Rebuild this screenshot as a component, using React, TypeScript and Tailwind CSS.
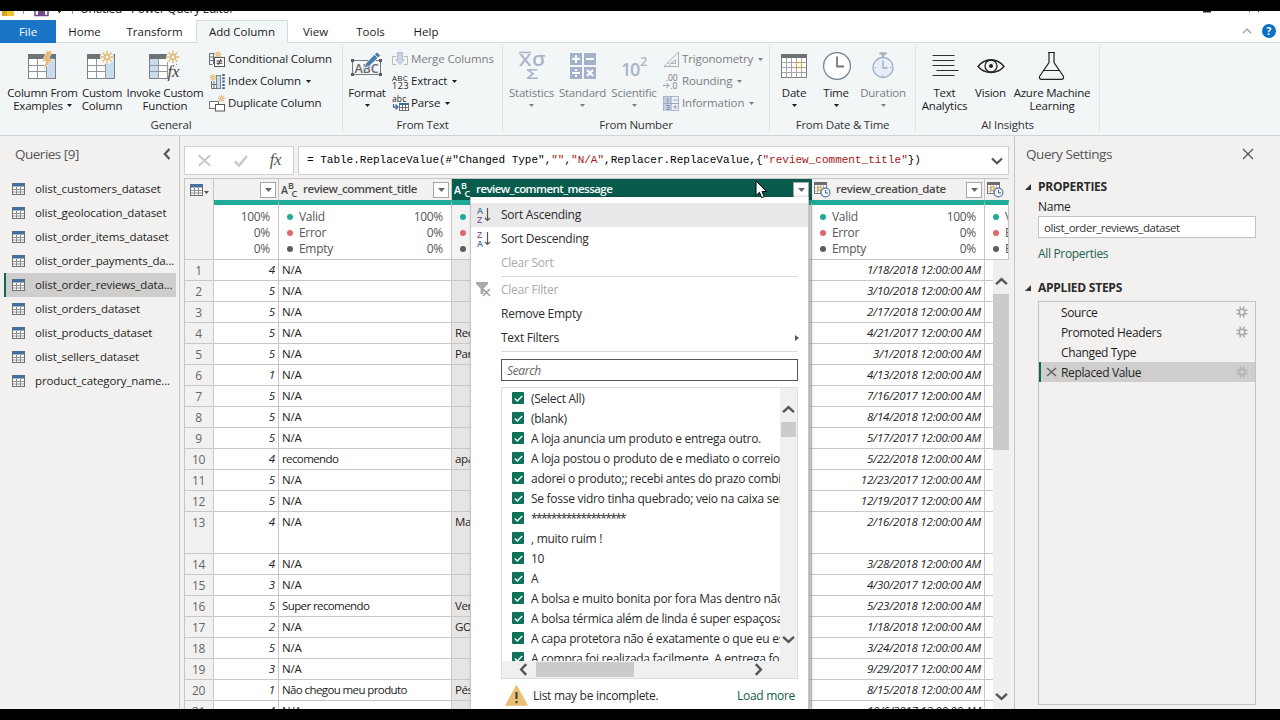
import React from "react";
import clsx from "clsx";

const TABS = [
  { label: "File", width: "w-[56px]" },
  { label: "Home", width: "w-[57px]" },
  { label: "Transform", width: "w-[83px]" },
  { label: "Add Column", width: "w-[92px]" },
  { label: "View", width: "w-[55px]" },
  { label: "Tools", width: "w-[55px]" },
  { label: "Help", width: "w-[56px]" },
];

const QUERIES = [
  "olist_customers_dataset",
  "olist_geolocation_dataset",
  "olist_order_items_dataset",
  "olist_order_payments_da...",
  "olist_order_reviews_data...",
  "olist_orders_dataset",
  "olist_products_dataset",
  "olist_sellers_dataset",
  "product_category_name...",
];

interface Row {
  score: number;
  title: string;
  message?: string;
  date: string;
  tall?: boolean;
}

const ROWS: Row[] = [
  { score: 4, title: "N/A", date: "1/18/2018" },
  { score: 5, title: "N/A", date: "3/10/2018" },
  { score: 5, title: "N/A", date: "2/17/2018" },
  { score: 5, title: "N/A", message: "Rec", date: "4/21/2017" },
  { score: 5, title: "N/A", message: "Par", date: "3/1/2018" },
  { score: 1, title: "N/A", date: "4/13/2018" },
  { score: 5, title: "N/A", date: "7/16/2017" },
  { score: 5, title: "N/A", date: "8/14/2018" },
  { score: 5, title: "N/A", date: "5/17/2017" },
  { score: 4, title: "recomendo", message: "apa", date: "5/22/2018" },
  { score: 5, title: "N/A", date: "12/23/2017" },
  { score: 5, title: "N/A", date: "12/19/2017" },
  { score: 4, title: "N/A", message: "Ma", date: "2/16/2018", tall: true },
  { score: 4, title: "N/A", date: "3/28/2018" },
  { score: 3, title: "N/A", date: "4/30/2017" },
  { score: 5, title: "Super recomendo", message: "Ver", date: "5/23/2018" },
  { score: 2, title: "N/A", message: "GO", date: "1/18/2018" },
  { score: 5, title: "N/A", date: "3/24/2018" },
  { score: 3, title: "N/A", date: "9/29/2017" },
  { score: 1, title: "Não chegou meu produto", message: "Pés", date: "8/15/2018" },
  { score: 4, title: "N/A", date: "10/6/2017" },
];

const FILTER_VALUES = [
  "(Select All)",
  "(blank)",
  "A loja anuncia um produto e entrega outro.",
  "A loja postou o produto de e mediato o correio",
  "adorei o produto;; recebi antes do prazo combinado",
  "Se fosse vidro tinha quebrado; veio na caixa sem",
  "*******************",
  ", muito ruim !",
  "10",
  "A",
  "A bolsa e muito bonita por fora Mas dentro não",
  "A bolsa térmica além de linda é super espaçosa",
  "A capa protetora não é exatamente o que eu esperava",
  "A compra foi realizada facilmente. A entrega foi",
];

const STEPS = [
  { name: "Source", gear: true },
  { name: "Promoted Headers", gear: true },
  { name: "Changed Type", gear: false },
  { name: "Replaced Value", gear: true },
];

const GRID_COLS = "grid grid-cols-[30px_65px_173px_360px_173px_24px]";

/* ---------- small glyphs ---------- */

function Caret({ className }: { className?: string }) {
  return (
    <svg width="5" height="3" viewBox="0 0 5 3" className={clsx("inline-block", className)}>
      <path d="M0 0h5L2.5 3z" fill="currentColor" />
    </svg>
  );
}

function Chevron({ dir, size = 12 }: { dir: "up" | "down" | "left" | "right"; size?: number }) {
  const d = {
    up: "M1 8.500 6 3.800l5 4.700",
    down: "M1 3.500 6 8.200l5-4.700",
    left: "M8.500 1 3.800 6l4.700 5",
    right: "M3.500 1 8.200 6l-4.700 5",
  }[dir];
  return (
    <svg width={size} height={size} viewBox="0 0 12 12" fill="none" stroke="#555" strokeWidth="2.200">
      <path d={d} />
    </svg>
  );
}

function Spark({ x, y, r = 6 }: { x: number; y: number; r?: number }) {
  const k = r * 0.7;
  return (
    <g stroke="#e2bd78" strokeWidth={r > 4 ? 1.5 : 1.1}>
      <path d={`M${x - r} ${y}H${x + r}M${x} ${y - r}V${y + r}M${x - k} ${y - k}L${x + k} ${y + k}M${x + k} ${y - k}L${x - k} ${y + k}`} />
      <circle cx={x} cy={y} r={r * 0.36} fill="#f3f6f7" />
    </g>
  );
}

function TableBase({ shade }: { shade: "left" | "right" }) {
  return (
    <g>
      <rect x="0.5" y="3.5" width="27" height="24" fill="#fff" stroke="#7d8084" />
      {shade === "right" && <rect x="19" y="8" width="8" height="19" fill="#c9dcee" />}
      {shade === "left" && <rect x="1" y="8" width="8.500" height="19" fill="#c9dcee" />}
      <path d="M0 3h28v5H0z" fill="#6f7276" />
      <path d="M9.500 8v20M18.500 8v20M1 14.500h18M1 20.500h18" stroke="#93969a" fill="none" />
    </g>
  );
}

/* ---------- ribbon icons ---------- */

const IconExamples = () => (
  <svg width="30" height="30" viewBox="0 0 30 30">
    <TableBase shade="right" />
    <path d="M18.500 0h6l-4 8h4.500L15 19l3-8.500h-3.500z" fill="#e5bb72" stroke="#f3f6f7" strokeWidth=".6" />
  </svg>
);

const IconCustom = () => (
  <svg width="30" height="30" viewBox="0 0 30 30">
    <TableBase shade="right" />
    <circle cx="20" cy="6" r="7" fill="#f3f6f7" />
    <Spark x={20} y={6} r={6.5} />
  </svg>
);

const IconInvoke = () => (
  <svg width="32" height="30" viewBox="0 0 32 30" className="overflow-visible">
    <TableBase shade="left" />
    <circle cx="24" cy="7" r="7" fill="#f3f6f7" />
    <path d="M19 14h13v17H19z" fill="#f3f6f7" />
    <Spark x={24} y={6} r={6.3} />
    <text x="18.500" y="26" fontSize="17" fontStyle="italic" fontFamily="Liberation Serif, serif" fill="#444">
      fx
    </text>
  </svg>
);

const IconConditional = () => (
  <svg width="17" height="17" viewBox="0 0 17 17">
    <path d="M.5 2v12M.5 2.500h5M.5 6h5M.5 9.500h4M.5 13.500h3M4.500 3v10" stroke="#6d7073" fill="none" />
    <Spark x={9} y={3.5} r={3.5} />
    <rect x="5.500" y="6.500" width="10" height="9" fill="#fff" stroke="#555" />
    <path d="M7.500 10h6M7.500 12.200h6M12 8l-3 6" stroke="#333" fill="none" />
  </svg>
);

const IconIndex = () => (
  <svg width="17" height="17" viewBox="0 0 17 17">
    <rect x="7.500" y="2.500" width="4" height="13" fill="#c9dcee" stroke="#7d8084" />
    <path d="M2.500 8v7.500h5M2.500 11.500h5M5 8v8" stroke="#6d7073" fill="none" />
    <path d="M14.500 1v15" stroke="#37679b" strokeWidth="2.500" strokeDasharray="2 1.300" />
    <Spark x={4} y={4.5} r={3.5} />
  </svg>
);

const IconDuplicate = () => (
  <svg width="17" height="17" viewBox="0 0 17 17">
    <rect x=".5" y="6.500" width="9" height="7" fill="#fff" stroke="#777" />
    <rect x="6.500" y="9.500" width="9" height="6.500" fill="#fff" stroke="#555" />
    <Spark x={12.5} y={3.5} r={3.5} />
  </svg>
);

const IconFormat = () => (
  <svg width="32" height="30" viewBox="0 0 32 30">
    <rect x="1.500" y="9.500" width="28" height="14" fill="none" stroke="#77797c" />
    <path d="M0 8h3v3H0zM28 8h3v3h-3zM0 22h3v3H0zM28 22h3v3h-3z" fill="#5b5d60" />
    <text x="3.500" y="21.500" fontSize="12.500" fontWeight="600" fontFamily="Open Sans, sans-serif" fill="#6a6c6f" textLength="24" lengthAdjust="spacingAndGlyphs">
      ABC
    </text>
    <path d="M13 17.500l2-5.500L26 1l3.500 3.500L18.500 15z" fill="#4d7fae" stroke="#f3f6f7" strokeWidth=".8" />
    <path d="M23.500 3.500l3.500 3.500" stroke="#f3f6f7" />
  </svg>
);

const IconMerge = () => (
  <svg width="17" height="16" viewBox="0 0 17 16">
    <path d="M4 5.500H.5v8H4M12 5.500h3.500v8H12" fill="none" stroke="#b5b9c0" />
    <path d="M5.500 1.500h5v7h2L8 13.500 3.500 8.500h2z" fill="#c9d3e2" stroke="#b4bfd0" />
  </svg>
);

const IconExtract = () => (
  <svg width="17" height="17" viewBox="0 0 17 17" className="overflow-visible" fontFamily="Open Sans, sans-serif" fill="#222">
    <text x="0" y="7.500" fontSize="8" textLength="15.500">
      ABC
    </text>
    <text x="0" y="16" fontSize="9" textLength="16.500">
      123
    </text>
  </svg>
);

const IconParse = () => (
  <svg width="17" height="17" viewBox="0 0 17 17" className="overflow-visible">
    <text x="0" y="7" fontSize="8.500" fontFamily="Open Sans, sans-serif" fill="#222" textLength="14">
      abc
    </text>
    <path d="M1.500 9v3h4M3.500 9.500l2.500 2.500-2.500 2.500" fill="none" stroke="#3c6d9c" strokeWidth="1.300" />
    <rect x="7.500" y="8.500" width="9" height="7" fill="#fff" stroke="#6d7073" />
    <path d="M7 8h10v2H7z" fill="#3c6d9c" />
    <path d="M10.500 10v6M13.500 10v6M8 12.500h8" stroke="#6d7073" fill="none" />
  </svg>
);

const IconStatistics = () => (
  <svg width="28" height="30" viewBox="0 0 28 30" className="overflow-visible" fontFamily="Open Sans, sans-serif" fontWeight="600" fill="#a9b5c9">
    <path d="M1 1.500h12" stroke="#a9b5c9" strokeWidth="1.500" />
    <text x="1" y="14.500" fontSize="15.500" textLength="12" lengthAdjust="spacingAndGlyphs">X</text>
    <text x="14" y="14.500" fontSize="20" textLength="13" lengthAdjust="spacingAndGlyphs">σ</text>
    <text x="8" y="28" fontSize="15" textLength="12" lengthAdjust="spacingAndGlyphs">Σ</text>
  </svg>
);

const IconStandard = () => (
  <svg width="28" height="30" viewBox="0 0 28 30">
    <path d="M1 2h12v12H1zM15 2h12v12H15zM1 16h12v12H1zM15 16h12v12H15z" fill="#a3b2ca" />
    <path d="M3 8h8M7 4v8M17 8h8M3 22h8M18 19l6 6M24 19l-6 6" stroke="#fff" strokeWidth="2" />
    <path d="M6 18h2v2H6zM6 24h2v2H6z" fill="#fff" />
  </svg>
);

const IconScientific = () => (
  <svg width="28" height="30" viewBox="0 0 28 30" className="overflow-visible" fontFamily="Open Sans, sans-serif" fontWeight="600" fill="#a9b5c9">
    <text x="1" y="25" fontSize="18" textLength="19">10</text>
    <text x="20" y="15" fontSize="13">2</text>
  </svg>
);

const IconTrig = () => (
  <svg width="17" height="17" viewBox="0 0 17 17" fill="none" stroke="#aab0b8">
    <path d="M15.500 1v14.500H1zM12.500 9v3.500h-5z" />
    <path d="M5 12c1.500.5 2 2 2 3.500" />
  </svg>
);

const IconRounding = () => (
  <svg width="17" height="17" viewBox="0 0 17 17" className="overflow-visible" fontFamily="Open Sans, sans-serif" fill="#75797e">
    <text x="3" y="7.500" fontSize="8.500">.00</text>
    <text x="7.500" y="15.500" fontSize="8.500">.0</text>
    <path d="M0 12.500h6M3.500 10l2.500 2.500L3.500 15" fill="none" stroke="#98a0ac" />
  </svg>
);

const IconInformation = () => (
  <svg width="17" height="16" viewBox="0 0 17 16">
    <rect x=".5" y="1.500" width="15" height="14" fill="#eef2f7" stroke="#a9b5c9" />
    <path d="M1 2h7v14H1z" fill="#c4d0e2" />
    <path d="M8 1.500v14M1 8.500h15M10 5h4.500M10 12h4.500M12.200 9.800v4.400" stroke="#98a5bb" fill="none" />
    <path d="M3.500 4h1.500v3.500M3 10.500h3v2H4M6 12.500v2H3" stroke="#8492aa" fill="none" />
  </svg>
);

const IconDate = () => (
  <svg width="28" height="30" viewBox="0 0 28 30">
    <rect x="1.500" y="3.500" width="25" height="23" fill="#fff" stroke="#7d7f82" />
    <path d="M1 3h26v4H1z" fill="#6f7072" />
    <path d="M6.500 7v20M11.500 7v20M16.500 7v20M21.500 7v20M2 11.500h24M2 16.500h24M2 21.500h24" stroke="#a3a5a8" fill="none" />
    <rect x="16.500" y="11.500" width="5" height="5" fill="#fff" stroke="#d9a441" />
  </svg>
);

const IconTime = () => (
  <svg width="30" height="30" viewBox="0 0 30 30" fill="none" className="ml-px">
    <circle cx="15" cy="15" r="13.400" fill="#fff" stroke="#6e7f8f" strokeWidth="1.200" />
    <path d="M15 5.500V15.500h7" stroke="#777" strokeWidth="1.800" />
  </svg>
);

const IconDuration = () => (
  <svg width="24" height="30" viewBox="0 0 24 30" fill="none">
    <path d="M8.500 2.500h7M12 2v4" stroke="#a9b0ba" strokeWidth="2.500" />
    <circle cx="12" cy="16.500" r="10" fill="#e6eef9" stroke="#a4b4ca" strokeWidth="1.300" />
    <path d="M12 9.500v7.500h4.500" stroke="#a2adbd" strokeWidth="1.400" />
    <path d="M12 24v1.500M3.500 16.500H5M19 16.500h1.500" stroke="#a2adbd" />
  </svg>
);

const IconTextAnalytics = () => (
  <svg width="28" height="30" viewBox="0 0 28 30">
    <path d="M1.500 4.500h22M1.500 9.500h22M1.500 14.500h22M5.500 19.500h22M1.500 24.500h22" stroke="#2f2f2f" strokeWidth="1.100" />
  </svg>
);

const IconVision = () => (
  <svg width="28" height="30" viewBox="0 0 28 30" fill="none" stroke="#222" strokeWidth="1.300">
    <path d="M1 15.500C8 6.500 20 6.500 27 15.500 20 23.500 8 23.500 1 15.500z" />
    <circle cx="14" cy="15" r="6" />
    <circle cx="14" cy="15" r="2" fill="#222" stroke="none" />
  </svg>
);

const IconFlask = () => (
  <svg width="28" height="30" viewBox="0 0 28 30" fill="none" stroke="#222" strokeWidth="1.200">
    <path d="M10 1.500h7M11 1.500v10L1.800 25c-1 1.800 0 3.300 1.800 3.300h19.800c1.800 0 2.800-1.500 1.800-3.300L16 11.500v-10M5 19.500h17" />
  </svg>
);

/* ---------- ribbon ---------- */

interface BigButtonProps {
  icon: React.ReactNode;
  lines: string[];
  width: string;
  caret?: "inline" | "below";
  disabled?: boolean;
}

function BigButton({ icon, lines, width, caret, disabled }: BigButtonProps) {
  return (
    <div className={clsx("flex shrink-0 flex-col items-center", width, disabled ? "text-[#7b7d80]" : "text-[#1b1b1b]")}>
      <div className="flex h-[30px] items-center justify-center">{icon}</div>
      <div className="mt-[5px] flex flex-col items-center whitespace-nowrap leading-[13px]">
        {lines.map((line, i) => (
          <span key={line}>
            {line}
            {caret === "inline" && i === lines.length - 1 && <Caret className="ml-1 mb-[3px]" />}
          </span>
        ))}
      </div>
      {caret === "below" && <Caret className="mt-[5px]" />}
    </div>
  );
}

function SmallButton({ icon, label, caret, disabled }: { icon: React.ReactNode; label: string; caret?: boolean; disabled?: boolean }) {
  return (
    <div className={clsx("flex h-[22px] items-center gap-[2px] whitespace-nowrap", disabled ? "text-[#7b7d80]" : "text-[#1b1b1b]")}>
      <span className="w-[17px]">{icon}</span>
      <span className="tracking-[-0.13px]">{label}</span>
      {caret && <Caret className="ml-[3px]" />}
    </div>
  );
}

function Group({ title, width, children }: { title: string; width: string; children: React.ReactNode }) {
  return (
    <div className={clsx("my-[3px] flex shrink-0 flex-col border-r border-[#dde3e6]", width)}>
      <div className="flex h-[73px]">{children}</div>
      <div className="pt-[2px] text-center leading-[14px] text-[#333]">{title}</div>
    </div>
  );
}

function Ribbon() {
  return (
    <div className="flex h-[93px] shrink-0 border-b border-[#cfd5d9] bg-[#f3f6f7] text-[11.5px] tracking-[-0.22px]">
      <Group title="General" width="w-[343px]">
        <div className="flex pl-2 pt-[5px]">
          <BigButton icon={<IconExamples />} lines={["Column From", "Examples"]} width="w-[69px]" caret="inline" />
          <BigButton icon={<IconCustom />} lines={["Custom", "Column"]} width="w-[50px]" />
          <BigButton icon={<IconInvoke />} lines={["Invoke Custom", "Function"]} width="w-[76px]" />
        </div>
        <div className="ml-[6px] pt-[2px]">
          <SmallButton icon={<IconConditional />} label="Conditional Column" />
          <SmallButton icon={<IconIndex />} label="Index Column" caret />
          <SmallButton icon={<IconDuplicate />} label="Duplicate Column" />
        </div>
      </Group>
      <Group title="From Text" width="w-[160px]">
        <div className="pl-[5px] pt-[5px]">
          <BigButton icon={<IconFormat />} lines={["Format"]} width="w-[38px]" caret="below" />
        </div>
        <div className="ml-[6px] pt-[2px]">
          <SmallButton icon={<IconMerge />} label="Merge Columns" disabled />
          <SmallButton icon={<IconExtract />} label="Extract" caret />
          <SmallButton icon={<IconParse />} label="Parse" caret />
        </div>
      </Group>
      <Group title="From Number" width="w-[267px]">
        <div className="flex pl-[4px] pt-[5px]">
          <BigButton icon={<IconStatistics />} lines={["Statistics"]} width="w-[49px]" caret="below" disabled />
          <BigButton icon={<IconStandard />} lines={["Standard"]} width="w-[53px]" caret="below" disabled />
          <BigButton icon={<IconScientific />} lines={["Scientific"]} width="w-[50px]" caret="below" disabled />
        </div>
        <div className="ml-[4px] pt-[2px]">
          <SmallButton icon={<IconTrig />} label="Trigonometry" caret disabled />
          <SmallButton icon={<IconRounding />} label="Rounding" caret disabled />
          <SmallButton icon={<IconInformation />} label="Information" caret disabled />
        </div>
      </Group>
      <Group title="From Date & Time" width="w-[146px]">
        <div className="flex pl-[4px] pt-[5px]">
          <BigButton icon={<IconDate />} lines={["Date"]} width="w-[40px]" caret="below" />
          <BigButton icon={<IconTime />} lines={["Time"]} width="w-[44px]" caret="below" />
          <BigButton icon={<IconDuration />} lines={["Duration"]} width="w-[50px]" caret="below" disabled />
        </div>
      </Group>
      <Group title="AI Insights" width="w-[184px]">
        <div className="flex pl-[4px] pt-[5px]">
          <BigButton icon={<IconTextAnalytics />} lines={["Text", "Analytics"]} width="w-[49px]" />
          <BigButton icon={<IconVision />} lines={["Vision"]} width="w-[43px]" />
          <BigButton icon={<IconFlask />} lines={["Azure Machine", "Learning"]} width="w-[80px]" />
        </div>
      </Group>
    </div>
  );
}

function TitleBar() {
  return (
    <div className="h-[9px] shrink-0 overflow-hidden bg-white">
      <div className="-mt-[10px] flex h-[16px] items-center text-[12px] leading-[16px] text-[#222]">
        <svg width="80" height="16" viewBox="0 0 80 16">
          <path d="M2 4h5v11H2z" fill="#d9a520" />
          <path d="M7 0h7v15H7z" fill="#f0c330" />
          <path d="M23.500 0v13M72.500 0v13" stroke="#999" />
          <path d="M35 2h13v12.500H35z" fill="#fff" stroke="#6b4a86" strokeWidth="1.500" />
          <path d="M38 9h7v5h-7z" fill="#6b4a86" />
          <path d="M57 9h5l-2.500 3.500z" fill="#333" />
        </svg>
        <span className="tracking-[-0.36px]">Untitled - Power Query Editor</span>
        <svg width="60" height="16" viewBox="0 0 60 16" className="ml-auto mr-[17px]">
          <path d="M0 9h8v2.500H0z" fill="#222" />
          <path d="M46.500 3v8M55.500 3v8" stroke="#444" />
        </svg>
      </div>
    </div>
  );
}

function TabStrip() {
  return (
    <div className="flex h-[23px] shrink-0 bg-white text-[11.5px] leading-[24px] text-[#1b1b1b]">
      {TABS.map(({ label, width }) => (
        <div
          key={label}
          className={clsx(
            "h-[23px] shrink-0 text-center",
            width,
            label === "File" && "bg-[#1a75c7] text-white",
            label === "Add Column" && "border-x border-t border-[#d5dbdf] bg-[#f3f6f7] leading-[22px]",
            label !== "File" && label !== "Add Column" && "border-b border-[#d5dbdf]",
          )}
        >
          {label}
        </div>
      ))}
      <div className="flex flex-1 items-center justify-end gap-[10px] border-b border-[#d5dbdf] pr-[4px]">
        <svg width="10" height="6" viewBox="0 0 10 6" fill="none" stroke="#999" strokeWidth="1.200">
          <path d="M1 5l4-4 4 4" />
        </svg>
        <span className="flex size-[14px] items-center justify-center rounded-full bg-[#0b6fc4] text-[10px] font-bold leading-none text-white">
          ?
        </span>
      </div>
    </div>
  );
}

/* ---------- queries pane ---------- */

function TableIcon() {
  return (
    <svg width="13" height="12" viewBox="0 0 13 12" className="shrink-0">
      <rect x=".5" y=".5" width="12" height="11" fill="#fff" stroke="#6c6e70" />
      <path d="M0 0h13v3.500H0z" fill="#47719b" />
      <path d="M4.500 3.500v8M8.500 3.500v8M1 6.500h11M1 9h11" stroke="#8b8d90" fill="none" />
    </svg>
  );
}

function QueriesPane() {
  return (
    <div className="flex w-[180px] shrink-0 flex-col border-r border-[#c8c6c4] bg-[#f2f1f0]">
      <div className="flex h-[41px] items-center justify-between pl-[15px] pr-[6px] pb-[5px] text-[13.5px] tracking-[-0.5px] text-[#555]">
        Queries [9]
        <Chevron dir="left" />
      </div>
      <div className="flex flex-col pl-[4px] pr-[3px]">
        {QUERIES.map((name, i) => (
          <div
            key={name}
            className={clsx(
              "flex h-6 items-center gap-[10px] whitespace-nowrap border-l-2 pl-[6px] text-[11.5px] tracking-[-0.13px] text-[#1f1f1f]",
              i === 4 ? "border-[#0b6a54] bg-[#cfcecd]" : "border-transparent",
            )}
          >
            <TableIcon />
            {name}
          </div>
        ))}
      </div>
    </div>
  );
}

/* ---------- data grid ---------- */

function FormulaBar() {
  return (
    <div className="flex h-[29px] shrink-0 gap-[4px]">
      <div className="flex w-[110px] items-center justify-between border border-[#d2d0ce] bg-white pl-[12px] pr-[12px]">
        <svg width="15" height="13" viewBox="0 0 17 14" stroke="#c8c8c8" strokeWidth="2.200" fill="none">
          <path d="M2 1l13 12M15 1L2 13" />
        </svg>
        <svg width="14" height="12" viewBox="0 0 14 12" stroke="#c8c8c8" strokeWidth="2.500" fill="none">
          <path d="M1 6.500l4 4L13 1" />
        </svg>
        <span className="pb-[3px] font-['Liberation_Serif',serif] text-[17px] italic leading-none tracking-[-0.5px] text-[#555]">fx</span>
      </div>
      <div className="flex flex-1 items-center justify-between border border-[#d2d0ce] bg-white pl-[8px] pr-[5px]">
        <code className="whitespace-pre font-['Liberation_Mono',monospace] text-[11px] text-black">
          = Table.ReplaceValue(#"Changed Type",<span className="text-[#a31515]">""</span>,
          <span className="text-[#a31515]">"N/A"</span>,Replacer.ReplaceValue,{"{"}
          <span className="text-[#a31515]">"review_comment_title"</span>
          {"})"}
        </code>
        <Chevron dir="down" />
      </div>
    </div>
  );
}

function FilterButton() {
  return (
    <span className="flex size-[16px] shrink-0 items-center justify-center border border-[#a6a6a6] bg-white text-[#666]">
      <svg width="7" height="4" viewBox="0 0 7 4">
        <path d="M0 0h7L3.500 4z" fill="currentColor" />
      </svg>
    </span>
  );
}

function TextTypeIcon() {
  return (
    <svg width="17" height="17" viewBox="0 0 17 17" className="overflow-visible" fontFamily="Open Sans, sans-serif" fontWeight="600" fill="currentColor">
      <text x="0" y="12.500" fontSize="10.500">A</text>
      <text x="7" y="8" fontSize="9">B</text>
      <text x="10.500" y="16" fontSize="9">C</text>
    </svg>
  );
}

function DateTypeIcon() {
  return (
    <svg width="17" height="17" viewBox="0 0 17 17" className="shrink-0">
      <rect x=".5" y="1.500" width="12" height="11" fill="#fff" stroke="#77797c" />
      <path d="M0 1h13v3H0z" fill="#6f6a6d" />
      <path d="M3.500 4v8M6.500 4v8M9.500 4v8M1 7h11M1 10h11" stroke="#aaa" fill="none" strokeWidth=".8" />
      <rect x="4" y="6" width="3" height="3" fill="#fff" stroke="#d09a35" />
      <circle cx="11.500" cy="11.500" r="4.400" fill="#f4f8fc" stroke="#5b7fa8" strokeWidth="1.200" />
      <path d="M11.500 9v3H14" stroke="#4a5968" fill="none" />
    </svg>
  );
}

function ColumnHeader({ name, type, selected }: { name: string; type: "text" | "date"; selected?: boolean }) {
  return (
    <div
      className={clsx(
        "flex items-center overflow-hidden border-r pl-[2px] pr-[2px]",
        selected ? "border-[#085c4d] bg-[#085c4d] text-white" : "border-[#c8c6c4] bg-[#f2f1f0] text-[#4a4a4a]",
      )}
    >
      {type === "text" ? <TextTypeIcon /> : <DateTypeIcon />}
      <span
        className={clsx(
          "ml-[5px] flex-1 whitespace-nowrap pb-px text-[11.5px] font-semibold",
          selected ? "tracking-[-0.55px]" : "tracking-[-0.4px]",
        )}
      >
        {name}
      </span>
      <FilterButton />
    </div>
  );
}

function Stats({ labels = true, values = true, dotsOnly, gray }: { labels?: boolean; values?: boolean; dotsOnly?: boolean; gray?: boolean }) {
  const items = [
    { name: "Valid", pct: "100%", dot: "bg-[#1fab98]" },
    { name: "Error", pct: "0%", dot: "bg-[#e0676b]" },
    { name: "Empty", pct: "0%", dot: "bg-[#5c5c5c]" },
  ];
  return (
    <div className={clsx("overflow-hidden border-r border-t-[5px] border-[#c8c6c4] border-t-[#1fab98] pt-[3px]", gray ? "bg-[#f4f3f3]" : "bg-white")}>
      {items.map(({ name, pct, dot }) => (
        <div key={name} className="flex h-4 items-center pl-[8px] pr-[8px] pt-px text-[12px] leading-[15px] tracking-[-0.3px] text-[#555]">
          {labels && <span className={clsx("mr-[6px] size-[6px] shrink-0 rounded-full", dot)} />}
          {labels && !dotsOnly && name}
          {values && <span className="ml-auto">{pct}</span>}
        </div>
      ))}
    </div>
  );
}

function GridRow({ row, index }: { row: Row; index: number }) {
  const cell = "border-r border-b border-[#c9c7c5] overflow-hidden whitespace-nowrap";
  return (
    <div className={clsx(GRID_COLS, "shrink-0 text-[11.5px] leading-[20px] text-[#222]", row.tall ? "h-[42px]" : "h-[21px]")}>
      <div className={clsx(cell, "bg-[#f2f1f0] text-center text-[12px] leading-[21px] tracking-[-0.25px] text-[#666]")}>{index + 1}</div>
      <div className={clsx(cell, "bg-white pr-[3px] text-right italic")}>{row.score}</div>
      <div className={clsx(cell, "bg-white pl-[3px]", row.title === "N/A" ? "tracking-[-0.25px]" : "tracking-[-0.6px]")}>{row.title}</div>
      <div className={clsx(cell, "bg-[#e6e5e4] pl-[3px] tracking-[-0.4px]")}>{row.message}</div>
      <div className={clsx(cell, "bg-white pr-[3px] text-right italic tracking-[-0.2px]")}>{row.date} 12:00:00 AM</div>
      <div className="border-b border-[#c9c7c5] bg-white" />
    </div>
  );
}

function DataGrid() {
  return (
    <div className="mt-[3px] flex min-h-0 w-[825px] flex-1 flex-col overflow-hidden border-l border-t border-[#c8c6c4]">
      <div className={clsx(GRID_COLS, "-ml-px h-[21px] shrink-0")}>
        <div className="flex items-center gap-px border-x border-[#c8c6c4] bg-[#f2f1f0] pl-[5px] text-[#555]">
          <TableIcon />
          <Caret className="mt-[5px]" />
        </div>
        <div className="flex items-center justify-end border-r border-[#c8c6c4] bg-[#f2f1f0] pr-[2px]">
          <FilterButton />
        </div>
        <ColumnHeader name="review_comment_title" type="text" />
        <ColumnHeader name="review_comment_message" type="text" selected />
        <ColumnHeader name="review_creation_date" type="date" />
        <div className="flex items-center overflow-hidden bg-[#f2f1f0] pl-[2px]">
          <DateTypeIcon />
        </div>
      </div>
      <div className={clsx(GRID_COLS, "-ml-px h-[60px] shrink-0 border-b border-[#c9c7c5]")}>
        <div className="border-x border-[#c8c6c4] bg-[#f2f1f0]" />
        <Stats labels={false} />
        <Stats />
        <Stats values={false} dotsOnly gray />
        <Stats />
        <Stats values={false} />
      </div>
      <div className="relative -ml-px flex min-h-0 flex-1 flex-col border-l border-[#c8c6c4]">
        <div className="-ml-px flex flex-col">
          {ROWS.map((row, i) => (
            <GridRow key={i} row={row} index={i} />
          ))}
        </div>
        <div className="absolute inset-y-0 right-0 flex w-4 flex-col items-center bg-[#efefef]">
          <div className="flex h-[34px] items-center pt-[9px]">
            <Chevron dir="up" size={13} />
          </div>
          <div className="h-[156px] w-full bg-[#cbcbcb]" />
          <div className="mt-auto mb-[6px]">
            <Chevron dir="down" size={13} />
          </div>
        </div>
      </div>
    </div>
  );
}

/* ---------- column filter menu ---------- */

function SortIcon({ top, bottom }: { top: string; bottom: string }) {
  const color: Record<string, string> = { A: "#47739f", Z: "#8a5596" };
  return (
    <svg width="15" height="17" viewBox="0 0 15 17" className="overflow-visible" fontFamily="Open Sans, sans-serif" fontSize="9" fontWeight="600">
      <text x="1" y="7.500" fill={color[top]}>{top}</text>
      <text x="1" y="16.500" fill={color[bottom]}>{bottom}</text>
      <path d="M11.500 2v12.500M9 12l2.500 2.500L14 12" fill="none" stroke="#555" strokeWidth="1.200" />
    </svg>
  );
}

function MenuItem({ label, icon, disabled, hover, submenu }: { label: string; icon?: React.ReactNode; disabled?: boolean; hover?: boolean; submenu?: boolean }) {
  return (
    <div
      className={clsx(
        "flex h-6 shrink-0 items-center pr-[9px] pb-px text-[12px] tracking-[-0.25px]",
        disabled ? "text-[#aaa]" : "text-[#2b2b2b]",
        hover && "bg-[#e9e9e9]",
      )}
    >
      <span className="flex w-[30px] shrink-0 pb-px pl-[5px]">{icon}</span>
      <span className="flex-1">{label}</span>
      {submenu && (
        <svg width="4" height="6" viewBox="0 0 4 6">
          <path d="M0 0l4 3-4 3z" fill="#555" />
        </svg>
      )}
    </div>
  );
}

function Separator({ className }: { className?: string }) {
  return <div className={clsx("ml-[30px] mr-[10px] h-px shrink-0 bg-[#d9d9d9]", className)} />;
}

function FilterMenu() {
  return (
    <div className="absolute left-[470px] top-[61px] flex h-[512px] w-[339px] flex-col border-x border-[#c6c6c6] bg-white pt-[6px] shadow-[2px_0_4px_rgba(0,0,0,0.25)]">
      <MenuItem label="Sort Ascending" icon={<SortIcon top="A" bottom="Z" />} hover />
      <MenuItem label="Sort Descending" icon={<SortIcon top="Z" bottom="A" />} />
      <MenuItem label="Clear Sort" disabled />
      <Separator className="mt-[1px] mb-[1px]" />
      <MenuItem
        label="Clear Filter"
        disabled
        icon={
          <svg width="16" height="16" viewBox="0 0 16 16">
            <path d="M0 1h12v2L7.500 7.500V13h-3V7.500L0 3z" fill="#aaa" />
            <path d="M7 8l7 7M14 8l-7 7" stroke="#999" strokeWidth="1.400" />
          </svg>
        }
      />
      <MenuItem label="Remove Empty" />
      <MenuItem label="Text Filters" submenu />
      <Separator className="mt-[1px]" />
      <div className="ml-[30px] mr-[10px] mt-[7px] flex h-[22px] shrink-0 items-center border border-[#555] px-[5px] pt-px text-[12px] italic tracking-[-0.35px] text-[#666]">
        Search
      </div>
      <div className="ml-[30px] mr-[10px] mt-[6px] flex h-[292px] shrink-0 flex-col border border-[#dcdcdc]">
        <div className="flex h-[273px] shrink-0">
          <div className="flex min-w-0 flex-1 flex-col overflow-hidden pl-[10px] pt-px">
            {FILTER_VALUES.map((value) => (
              <div key={value} className="flex h-5 shrink-0 items-center gap-[7px] whitespace-nowrap text-[12px] text-[#2b2b2b]">
                <span className="mb-[2px] flex size-3 shrink-0 items-center justify-center rounded-[1px] bg-[#0f7159]">
                  <svg width="9" height="7" viewBox="0 0 9 7" fill="none" stroke="#fff" strokeWidth="1.400">
                    <path d="M.8 3.500l2.500 2.500L8.200 1" />
                  </svg>
                </span>
                <span className={value.startsWith("**") ? "tracking-[-1.66px]" : "tracking-[-0.28px]"}>{value}</span>
              </div>
            ))}
          </div>
          <div className="flex w-[17px] shrink-0 flex-col items-center bg-[#f0f0f0]">
            <div className="mt-[15px]">
              <Chevron dir="up" size={13} />
            </div>
            <div className="mt-[6px] h-[15px] w-[15px] bg-[#cbcbcb]" />
            <div className="mt-auto mb-[15px]">
              <Chevron dir="down" size={13} />
            </div>
          </div>
        </div>
        <div className="flex flex-1 items-center bg-[#f0f0f0] pl-[15px]">
          <Chevron dir="left" size={13} />
          <div className="ml-[6px] h-[15px] w-[98px] bg-[#cbcbcb]" />
          <span className="ml-[118px]">
            <Chevron dir="right" size={13} />
          </span>
        </div>
      </div>
      <div className="mt-[1px] flex h-[32px] items-center pl-[34px] pr-[13px] text-[12px] tracking-[-0.3px] text-[#2b2b2b]">
        <svg width="23" height="21" viewBox="0 0 23 21" className="mt-px">
          <path d="M11.500 1L22 20H1z" fill="#e9bf73" stroke="#e9bf73" strokeWidth="1.500" strokeLinejoin="round" />
          <path d="M11.500 7v7M11.500 16v2.200" stroke="#3b3b3b" strokeWidth="2" />
        </svg>
        <span className="ml-[5px] flex-1 pt-[3px]">List may be incomplete.</span>
        <span className="pt-[3px] text-[#0f5c48]">Load more</span>
      </div>
    </div>
  );
}

/* ---------- settings pane ---------- */

function SectionTitle({ children }: { children: string }) {
  return (
    <div className="flex items-center gap-[7px] text-[12px] font-bold tracking-[-0.25px] text-[#2b2b2b]">
      <svg width="6" height="6" viewBox="0 0 6 6">
        <path d="M6 0v6H0z" fill="#333" />
      </svg>
      {children}
    </div>
  );
}

function Gear({ faded }: { faded?: boolean }) {
  return (
    <svg width="12" height="12" viewBox="0 0 12 12" fill="none" stroke={faded ? "#b3b3b3" : "#a9a9a9"} strokeWidth="1.500">
      <circle cx="6" cy="6" r="2.800" />
      <path d="M4.200.5v3M7.800.5v3M4.200 8.500v3M7.800 8.500v3M.5 4.200h3M.5 7.800h3M8.500 4.200h3M8.500 7.800h3" />
    </svg>
  );
}

function SettingsPane() {
  return (
    <div className="flex w-[266px] shrink-0 flex-col border-l border-[#c8c6c4] bg-[#f2f1f0] pl-[10px] pr-[24px] text-[12px] text-[#1f1f1f]">
      <div className="flex h-[36px] items-center justify-between pr-[2px] text-[13.5px] tracking-[-0.45px] text-[#555]">
        <span className="pl-[1px]">Query Settings</span>
        <svg width="12" height="12" viewBox="0 0 12 12" stroke="#555" strokeWidth="1.300">
          <path d="M1 1l10 10M11 1L1 11" />
        </svg>
      </div>
      <div className="mt-[6px]">
        <SectionTitle>PROPERTIES</SectionTitle>
      </div>
      <div className="pl-[13px]">
        <div className="mt-[2px] leading-[18px] tracking-[-0.25px]">Name</div>
        <div className="flex h-[22px] items-center border border-[#c4c2c0] bg-white px-[5px] pt-px text-[11.5px] tracking-[-0.45px] text-[#333]">
          olist_order_reviews_dataset
        </div>
        <div className="mt-[7px] tracking-[-0.33px] text-[#1d6450]">All Properties</div>
      </div>
      <div className="mt-[16px]">
        <SectionTitle>APPLIED STEPS</SectionTitle>
      </div>
      <div className="ml-[13px] mt-[4px] mb-[4px] flex-1 border border-[#c4c2c0]">
        {STEPS.map(({ name, gear }, i) => {
          const selected = i === STEPS.length - 1;
          return (
            <div
              key={name}
              className={clsx(
                "flex h-5 items-center border-l-2 pr-[7px] tracking-[-0.35px]",
                selected ? "border-[#0b6a54] bg-[#cfcecd]" : "border-transparent",
              )}
            >
              <span className="flex w-5 pl-[5px]">
                {selected && (
                  <svg width="11" height="10" viewBox="0 0 11 10" stroke="#666" strokeWidth="1.600">
                    <path d="M1 1l9 8M10 1L1 9" />
                  </svg>
                )}
              </span>
              <span className="flex-1 pt-[2px]">{name}</span>
              {gear && <Gear faded={selected} />}
            </div>
          );
        })}
      </div>
    </div>
  );
}

export default function App() {
  return (
    <div className="flex h-[720px] w-[1280px] flex-col overflow-hidden bg-black py-[11px] font-['Open_Sans','Noto_Sans',sans-serif]">
      <TitleBar />
      <TabStrip />
      <Ribbon />
      <div className="relative flex min-h-0 flex-1 overflow-hidden">
        <QueriesPane />
        <div className="flex w-[834px] shrink-0 flex-col bg-[#f2f1f0] pl-[4px] pr-[5px] pt-[10px]">
          <FormulaBar />
          <DataGrid />
        </div>
        <SettingsPane />
        <FilterMenu />
        <svg className="absolute left-[755px] top-[44px]" width="13" height="20" viewBox="0 0 13 20">
          <path d="M1 1v14.500l3.500-3.200 2.200 5.400 2.500-1-2.200-5.200h4.700z" fill="#fff" stroke="#000" />
        </svg>
      </div>
    </div>
  );
}
